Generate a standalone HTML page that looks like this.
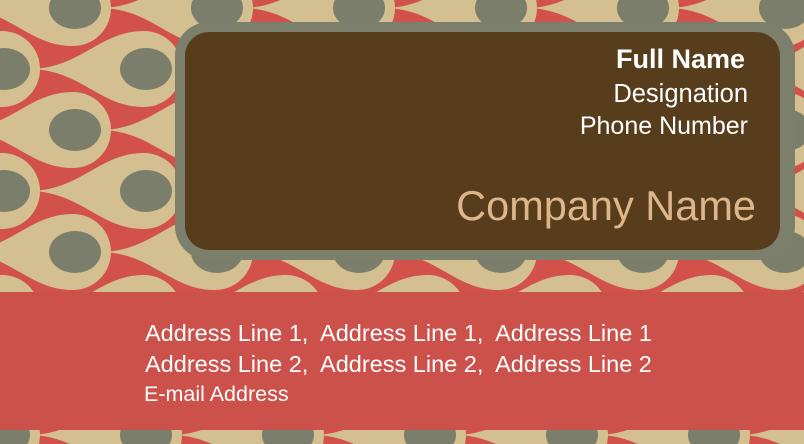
<!DOCTYPE html>
<html><head><style>
html,body{margin:0;padding:0;}
body{width:804px;height:444px;overflow:hidden;position:relative;background:#d2524b;font-family:"Liberation Sans",sans-serif;}
svg{position:absolute;left:0;top:0;}
.t{position:absolute;color:#fff;white-space:nowrap;}
</style></head><body>
<svg width="804" height="444" viewBox="0 0 804 444">
<defs>
<g id="d">
<path d="M-112,0 C-62,-2 -44,-38 0,-38 A38,38 0 0 1 0,38 C-44,38 -62,2 -112,0 Z" fill="#d4bf90"/>
<ellipse cx="2" cy="0" rx="26" ry="21" fill="#7a7e6b"/>
</g>
<pattern id="p" patternUnits="userSpaceOnUse" width="142" height="122" x="0" y="0">
<rect width="142" height="122" fill="#d2524b"/>
<use href="#d" x="73" y="-114"/><use href="#d" x="73" y="8"/><use href="#d" x="73" y="130"/>
<use href="#d" x="215" y="-114"/><use href="#d" x="215" y="8"/><use href="#d" x="215" y="130"/>
<use href="#d" x="2" y="-53"/><use href="#d" x="2" y="69"/><use href="#d" x="2" y="191"/>
<use href="#d" x="144" y="-53"/><use href="#d" x="144" y="69"/><use href="#d" x="144" y="191"/>
<use href="#d" x="286" y="-53"/><use href="#d" x="286" y="69"/><use href="#d" x="286" y="191"/>
</pattern>
</defs>
<rect width="804" height="444" fill="url(#p)"/>
<rect x="175" y="22" width="620" height="238" rx="34" fill="#7b7f6b"/>
<rect x="185" y="32" width="595" height="218" rx="24" fill="#573d1c"/>
<rect x="0" y="292" width="804" height="138" fill="#cd514b"/>
</svg>
<div class="t" style="right:59px;top:44px;font-size:27px;font-weight:bold;">Full Name</div>
<div class="t" style="right:56px;top:80px;font-size:25.5px;">Designation</div>
<div class="t" style="right:56px;top:112px;font-size:25px;">Phone Number</div>
<div class="t" style="right:48px;top:182px;font-size:41.5px;color:#ddb68b;">Company Name</div>
<div class="t" style="left:145px;top:320px;font-size:23.5px;">Address Line 1,&nbsp; Address Line 1,&nbsp; Address Line 1</div>
<div class="t" style="left:145px;top:351px;font-size:23.5px;">Address Line 2,&nbsp; Address Line 2,&nbsp; Address Line 2</div>
<div class="t" style="left:144px;top:382px;font-size:21.5px;">E-mail Address</div>
</body></html>
